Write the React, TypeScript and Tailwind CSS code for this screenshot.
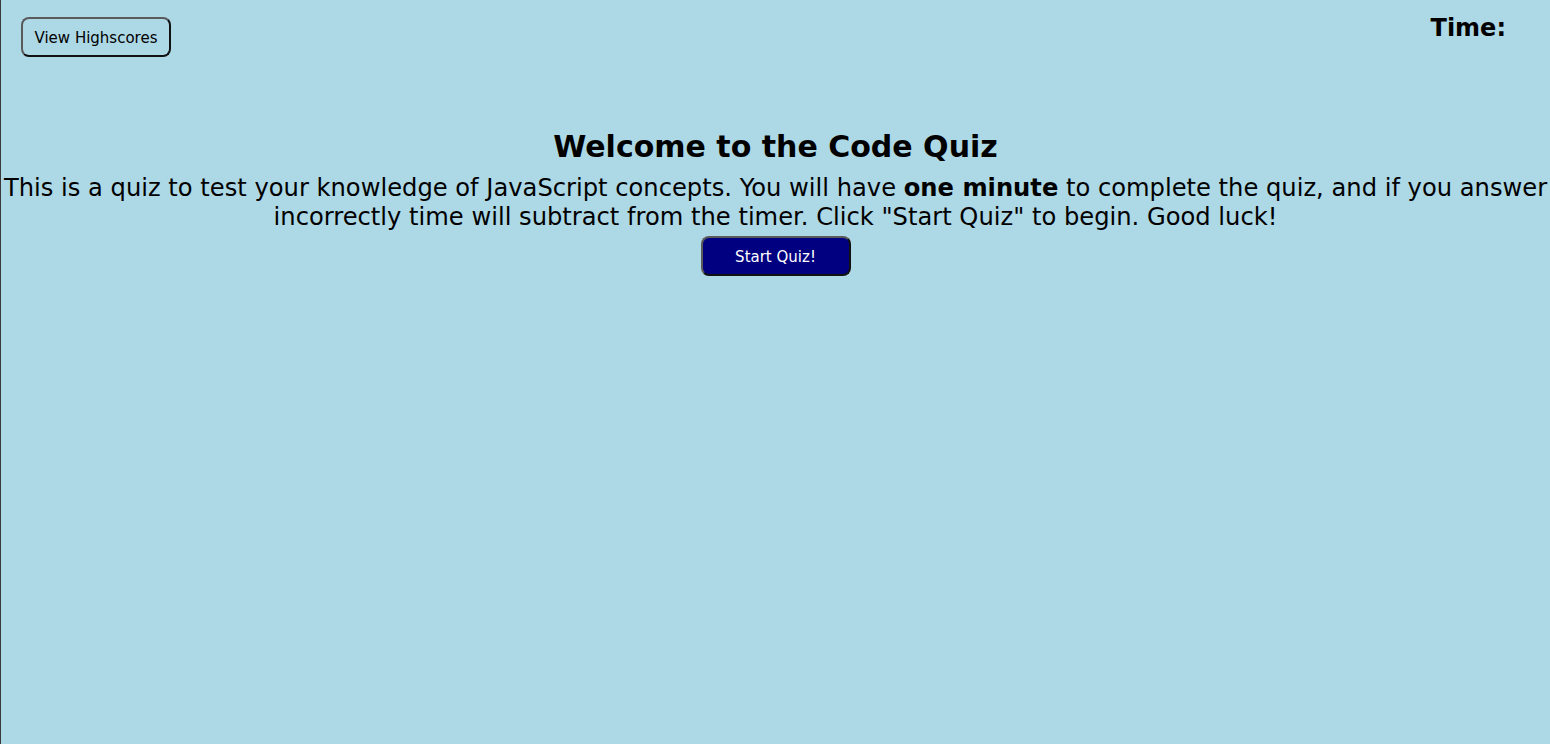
import React from 'react';

export default function App() {
  const [started, setStarted] = React.useState(false);

  return (
    <div className="min-h-screen w-full bg-[#add8e6] border-l border-[#3a3a3a] text-black [font-family:'DejaVu_Sans',Verdana,sans-serif]">
      {/* Top bar: highscores link + timer */}
      <header className="flex items-start justify-between pl-[20px] pr-[44px] pt-[17px]">
        <button className="h-[40px] w-[150px] rounded-[8px] border-2 border-t-[#5a5a5a] border-l-[#5a5a5a] border-r-[#111] border-b-[#111] bg-[#add8e6] pt-[2px] text-[15px] text-black">
          View Highscores
        </button>
        <div className="pt-[1px] text-[24px] font-bold leading-[20px]">Time:</div>
      </header>

      {/* Intro */}
      <main className="mt-[72px] flex flex-col items-center text-center">
        <h1 className="text-[30px] font-bold leading-[36px]">Welcome to the Code Quiz</h1>
        <p className="mt-[9px] text-[24.2px] leading-[29px]">
          This is a quiz to test your knowledge of JavaScript concepts. You will have{' '}
          <b>one minute</b> to complete the quiz, and if you answer incorrectly time will
          subtract from the timer. Click "Start Quiz" to begin. Good luck!
        </p>
        <button
          onClick={() => setStarted(!started)}
          className="mt-[4px] h-[40px] w-[150px] rounded-[8px] border-2 border-t-[#5a5a5a] border-l-[#5a5a5a] border-r-[#111] border-b-[#111] bg-[#000080] pt-[2px] text-[15px] text-white"
        >
          Start Quiz!
        </button>
      </main>
    </div>
  );
}
